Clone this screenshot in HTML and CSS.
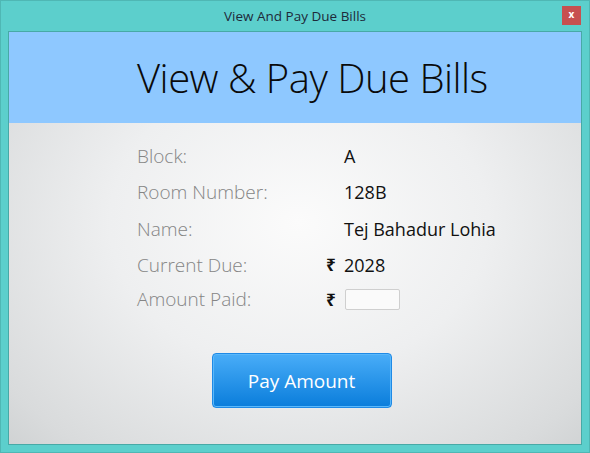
FILE: index.html
```html
<!DOCTYPE html>
<html>
<head>
<meta charset="utf-8">
<link rel="stylesheet" href="styles.css">
</head>
<body>
<div class="window">
  <div class="titlebar">
    <span class="title">View And Pay Due Bills</span>
    <span class="close">x</span>
  </div>
  <div class="content">
    <div class="header"><h1>View &amp; Pay Due Bills</h1></div>
    <div class="form">
      <span class="label">Block:</span><span class="sym"></span><span class="value">A</span>
      <span class="label">Room Number:</span><span class="sym"></span><span class="value">128B</span>
      <span class="label">Name:</span><span class="sym"></span><span class="value">Tej Bahadur Lohia</span>
      <span class="label">Current Due:</span><span class="sym">₹</span><span class="value">2028</span>
      <span class="label">Amount Paid:</span><span class="sym">₹</span><span class="value"><input class="amount" type="text"></span>
    </div>
    <div class="actions"><button class="pay">Pay Amount</button></div>
  </div>
</div>
</body>
</html>
```
FILE: styles.css
```css
html, body {
  margin: 0;
  padding: 0;
}
body {
  width: 590px;
  height: 453px;
  overflow: hidden;
  font-family: "Open Sans", "Noto Sans", sans-serif;
}
.window {
  box-sizing: border-box;
  width: 590px;
  height: 453px;
  background: #5ccfcc;
  border: 1px solid #4fb7b4;
  padding: 0 7px 7px 7px;
  display: flex;
  flex-direction: column;
}
.titlebar {
  height: 30px;
  position: relative;
  display: flex;
  align-items: center;
  justify-content: center;
}
.title {
  font-size: 13.5px;
  color: #1e2a3a;
}
.close {
  position: absolute;
  right: 1px;
  top: 5px;
  width: 19px;
  height: 19px;
  background: #c75050;
  color: #fff;
  font-size: 10px;
  font-weight: bold;
  line-height: 17px;
  text-align: center;
}
.content {
  flex: 1;
  border: 1px solid #48a9a6;
  background: radial-gradient(ellipse 420px 330px at 290px 190px, #fbfbfb 0%, #eeeff0 45%, #d9dbdc 85%, #cdd0d1 100%);
  display: flex;
  flex-direction: column;
}
.header {
  height: 91px;
  background: #8ec8ff;
  display: flex;
  align-items: center;
  padding-left: 128px;
}
.header h1 {
  margin: 0;
  font-size: 40px;
  font-weight: 300;
  color: #0a0a0a;
  letter-spacing: -0.5px;
}
.form {
  display: grid;
  grid-template-columns: 189px 18px auto;
  grid-template-rows: 36px 36px 37px 35px 34px;
  align-items: center;
  padding: 15px 0 0 128px;
}
.label {
  font-size: 19px;
  font-weight: 300;
  color: #858585;
}
.sym {
  font-size: 17px;
  font-weight: bold;
  color: #111;
  font-family: "Noto Sans", sans-serif;
}
.value {
  font-size: 18px;
  color: #111;
  display: flex;
  align-items: center;
}
.amount {
  box-sizing: border-box;
  width: 55px;
  height: 21px;
  border: 1px solid #cfcfcf;
  border-radius: 2px;
  background: #fafafa;
  margin-left: 1px;
}
.actions {
  display: flex;
  justify-content: center;
  padding: 37px 0 0 13px;
}
.pay {
  box-sizing: border-box;
  width: 180px;
  height: 55px;
  border: 1px solid #1f8ae6;
  border-radius: 4px;
  background: linear-gradient(#49adf8, #0a7ddb);
  box-shadow: inset 0 0 0 1px #5ab8fb;
  color: #fff;
  font-family: "Open Sans", sans-serif;
  font-size: 19px;
}
```
